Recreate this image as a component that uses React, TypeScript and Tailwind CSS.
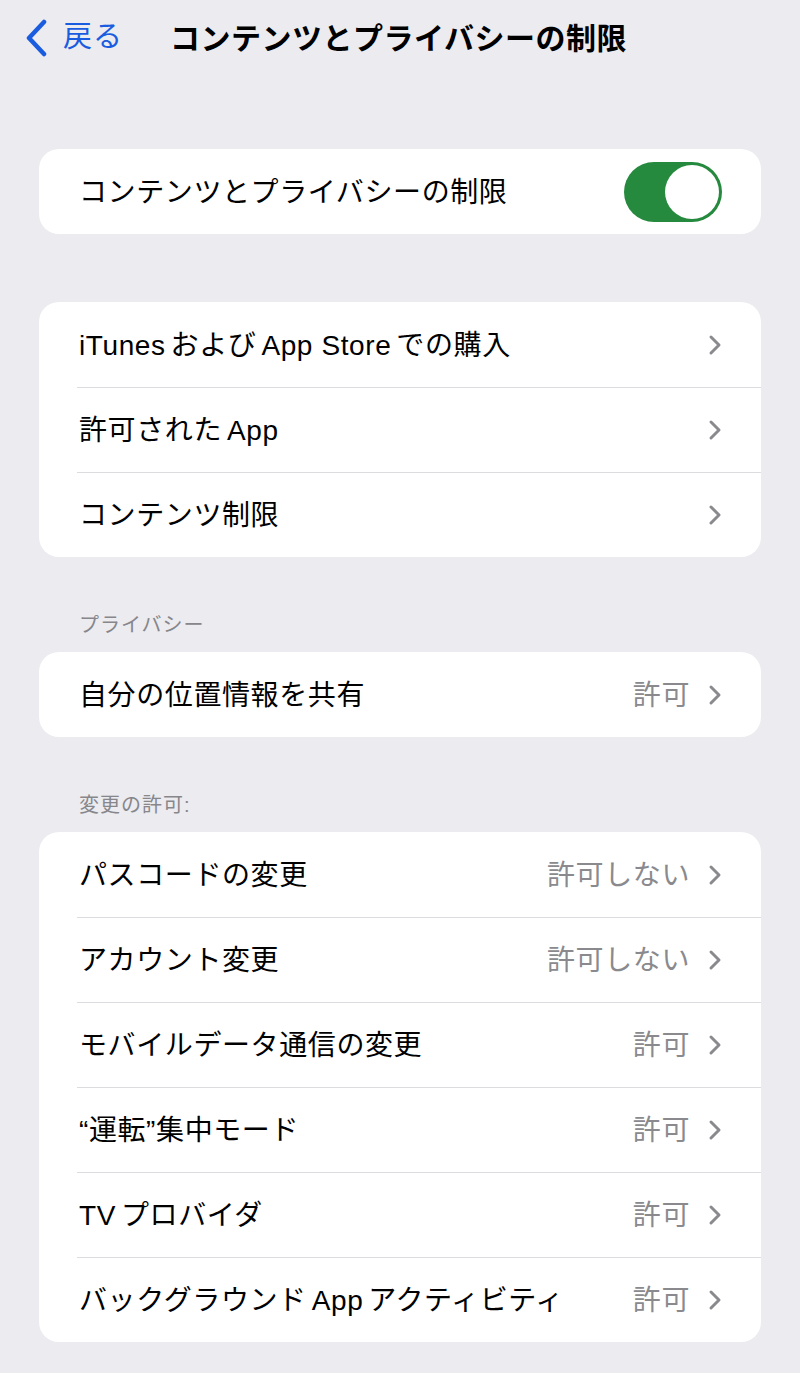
import React from "react";

const FONT = { fontFamily: '"Liberation Sans", "Noto Sans CJK JP", sans-serif' };

type Row = { label: string; value?: string };

const STORE_ROWS: Row[] = [
  { label: "iTunesおよびApp Storeでの購入" },
  { label: "許可されたApp" },
  { label: "コンテンツ制限" },
];

const PRIVACY_ROWS: Row[] = [{ label: "自分の位置情報を共有", value: "許可" }];

const CHANGE_ROWS: Row[] = [
  { label: "パスコードの変更", value: "許可しない" },
  { label: "アカウント変更", value: "許可しない" },
  { label: "モバイルデータ通信の変更", value: "許可" },
  { label: "“運転”集中モード", value: "許可" },
  { label: "TVプロバイダ", value: "許可" },
  { label: "バックグラウンドAppアクティビティ", value: "許可" },
];

// iOS puts a little air between Latin words and kana
function Label({ text }: { text: string }) {
  const parts = text.split(/([A-Za-z][A-Za-z ]*[A-Za-z]|[A-Za-z])/).filter(Boolean);
  return (
    <>
      {parts.map((p, i) =>
        /[A-Za-z]/.test(p) ? (
          <span key={i} className={`${i > 0 ? "pl-[5px]" : ""} ${i < parts.length - 1 ? "pr-[5px]" : ""}`}>
            {p}
          </span>
        ) : (
          <span key={i}>{p}</span>
        )
      )}
    </>
  );
}

function Chevron() {
  return (
    <svg width="14" height="22" viewBox="0 0 14 22" fill="none">
      <path d="M3 3l8 8-8 8" stroke="#8a8a8e" strokeWidth="3" strokeLinecap="round" strokeLinejoin="round" />
    </svg>
  );
}

function Group({ rows }: { rows: Row[] }) {
  return (
    <div className="mx-[39px] bg-white rounded-[20px] overflow-hidden">
      {rows.map((row, i) => (
        <div key={row.label} className="relative h-[85px] flex items-center pl-[40px] pr-[39px]">
          {i > 0 && <div className="absolute top-0 left-[38px] right-0 h-px bg-[#dcdce0]" />}
          <span className="flex-1 pt-[2px] text-[28px] text-black tracking-[0.6px] whitespace-nowrap">
            <Label text={row.label} />
          </span>
          {row.value && <span className="pt-[2px] text-[28px] text-[#8a8a8e] tracking-[0.6px] mr-[18px]">{row.value}</span>}
          <Chevron />
        </div>
      ))}
    </div>
  );
}

function SectionHeader({ title }: { title: string }) {
  return (
    <div className="mt-[56px] mb-[15px] px-[79px] text-[20px] leading-[24px] tracking-[1px] text-[#86868b]">{title}</div>
  );
}

export default function App() {
  return (
    <div className="w-[800px] h-[1373px] bg-[#ebebf0] overflow-hidden" style={FONT}>
      {/* Nav bar */}
      <div className="h-[76px] flex items-center">
        <div className="flex items-center pl-[24px] w-[170px]">
          <svg width="26" height="38" viewBox="0 0 26 38" fill="none">
            <path d="M20 3L5 19l15 16" stroke="#1a5ce0" strokeWidth="4.5" strokeLinecap="round" strokeLinejoin="round" />
          </svg>
          <span className="ml-[13px] text-[29px] tracking-[1px] text-[#1a5ce0]">戻る</span>
        </div>
        <span className="text-[30px] font-bold text-black tracking-[0.5px]">コンテンツとプライバシーの制限</span>
      </div>

      {/* Master toggle */}
      <div className="mt-[73px] mx-[39px] h-[85px] bg-white rounded-[20px] flex items-center pl-[40px] pr-[39px]">
        <span className="flex-1 pt-[2px] text-[28px] text-black tracking-[0.6px]">コンテンツとプライバシーの制限</span>
        <div className="w-[98px] h-[60px] rounded-full bg-[#258a3d] p-[3px] flex justify-end">
          <div className="w-[54px] h-[54px] rounded-full bg-white" />
        </div>
      </div>

      <div className="mt-[68px]">
        <Group rows={STORE_ROWS} />
      </div>

      <SectionHeader title="プライバシー" />
      <Group rows={PRIVACY_ROWS} />

      <SectionHeader title="変更の許可:" />
      <Group rows={CHANGE_ROWS} />
    </div>
  );
}
